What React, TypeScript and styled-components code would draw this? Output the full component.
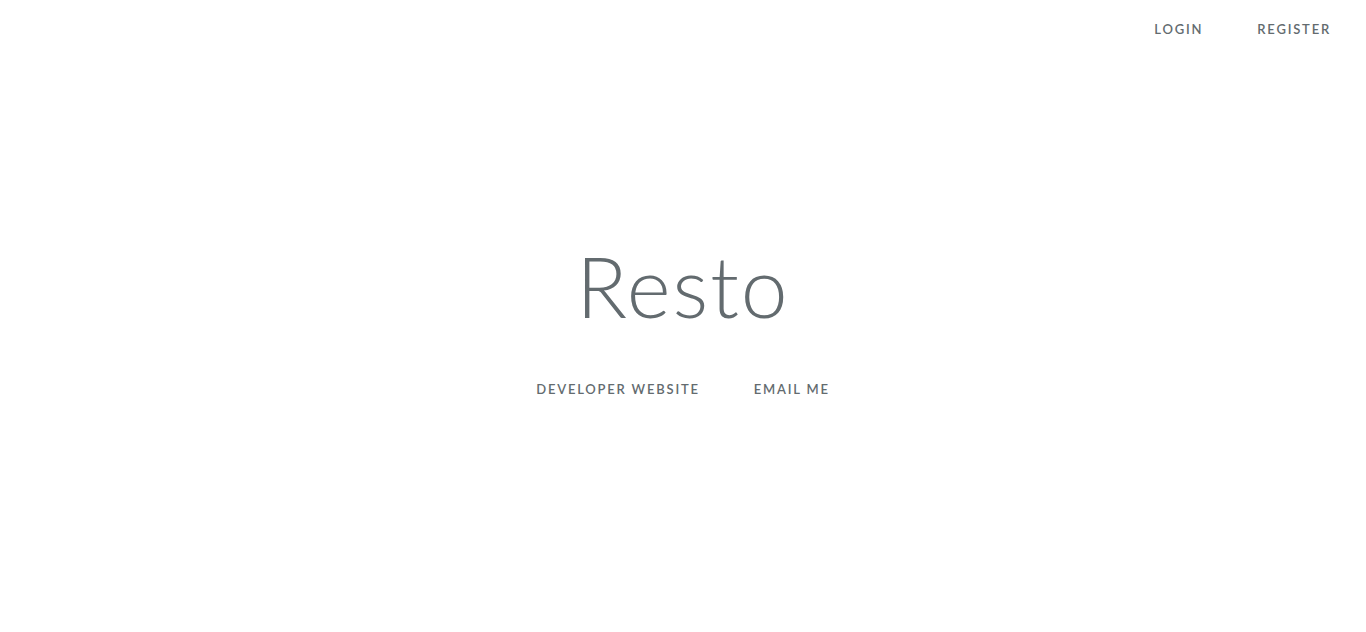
import styled, { createGlobalStyle } from "styled-components";

const Global = createGlobalStyle`
    html, body {
        margin: 0;
        background-color: #fff;
        color: #636b6f;
        font-family: "Lato", "Noto Sans", sans-serif;
        font-weight: 200;
        height: 100vh;
    }
`

/* page: header row, centered content, spacer */
const Page = styled.div`
    height: 100vh;
    display: grid;
    grid-template-rows: 40px 1fr 40px;
`
const TopRight = styled.nav`
    display: flex;
    justify-content: flex-end;
    padding: 20px 10px 0 0;
`
const Center = styled.main`
    display: flex;
    flex-direction: column;
    align-items: center;
    justify-content: center;
    padding-top: 2px;
`
const Title = styled.h1`
    margin: 0 0 44px;
    font-size: 84px;
    font-weight: 300;
    letter-spacing: 2px;
    line-height: 1.2;
`
const Links = styled.div`
    display: flex;
    gap: 4px;
`
const NavLink = styled.a`
    color: #636b6f;
    padding: 0 25px;
    font-size: 13px;
    font-weight: 600;
    letter-spacing: 1.8px;
    text-decoration: none;
    text-transform: uppercase;
    line-height: 18px;
`

const App = () => {
    return (
        <>
            <Global />
            <Page>
                <TopRight>
                    <Links>
                        <NavLink href="#">Login</NavLink>
                        <NavLink href="#">Register</NavLink>
                    </Links>
                </TopRight>
                <Center>
                    <Title>Resto</Title>
                    <Links>
                        <NavLink href="#">Developer Website</NavLink>
                        <NavLink href="#">Email me</NavLink>
                    </Links>
                </Center>
                <div />
            </Page>
        </>
    )
}
export default App;
